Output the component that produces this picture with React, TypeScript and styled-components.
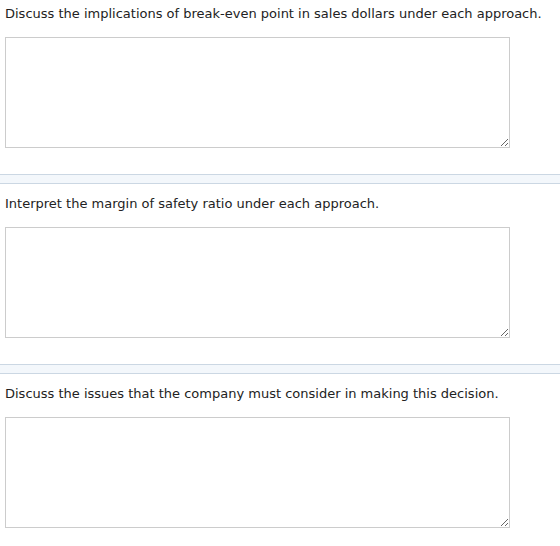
import React from "react";
import styled, { createGlobalStyle } from "styled-components";

const GlobalStyle = createGlobalStyle`
  html, body {
    margin: 0;
    padding: 0;
    background: #ffffff;
  }
  body {
    font-family: "DejaVu Sans", Verdana, sans-serif;
    color: #222222;
  }
`;

const Page = styled.div`
  width: 560px;
  padding-top: 6px;
`;

const Question = styled.section`
  display: flex;
  flex-direction: column;
  padding: 0 0 26px 5px;
`;

const Prompt = styled.p`
  margin: 0 0 15px;
  font-size: 13px;
  line-height: 16px;
  color: #222222;
`;

const Answer = styled.textarea`
  box-sizing: border-box;
  width: 505px;
  height: 111px;
  margin: 0;
  padding: 4px;
  border: 1px solid #cccccc;
  border-radius: 0;
  background: #ffffff;
  font-family: inherit;
  font-size: 13px;
  outline: none;
  resize: both;
`;

const Divider = styled.div`
  height: 8px;
  margin-bottom: 12px;
  border-top: 1px solid #cbd7e3;
  border-bottom: 1px solid #cbd7e3;
  background: #f3f7fb;
`;

const prompts = [
  "Discuss the implications of break-even point in sales dollars under each approach.",
  "Interpret the margin of safety ratio under each approach.",
  "Discuss the issues that the company must consider in making this decision.",
];

export default function App() {
  return (
    <>
      <GlobalStyle />
      <Page>
        {prompts.map((text, i) => (
          <React.Fragment key={text}>
            <Question>
              <Prompt>{text}</Prompt>
              <Answer aria-label={text} />
            </Question>
            {i < prompts.length - 1 && <Divider />}
          </React.Fragment>
        ))}
      </Page>
    </>
  );
}
